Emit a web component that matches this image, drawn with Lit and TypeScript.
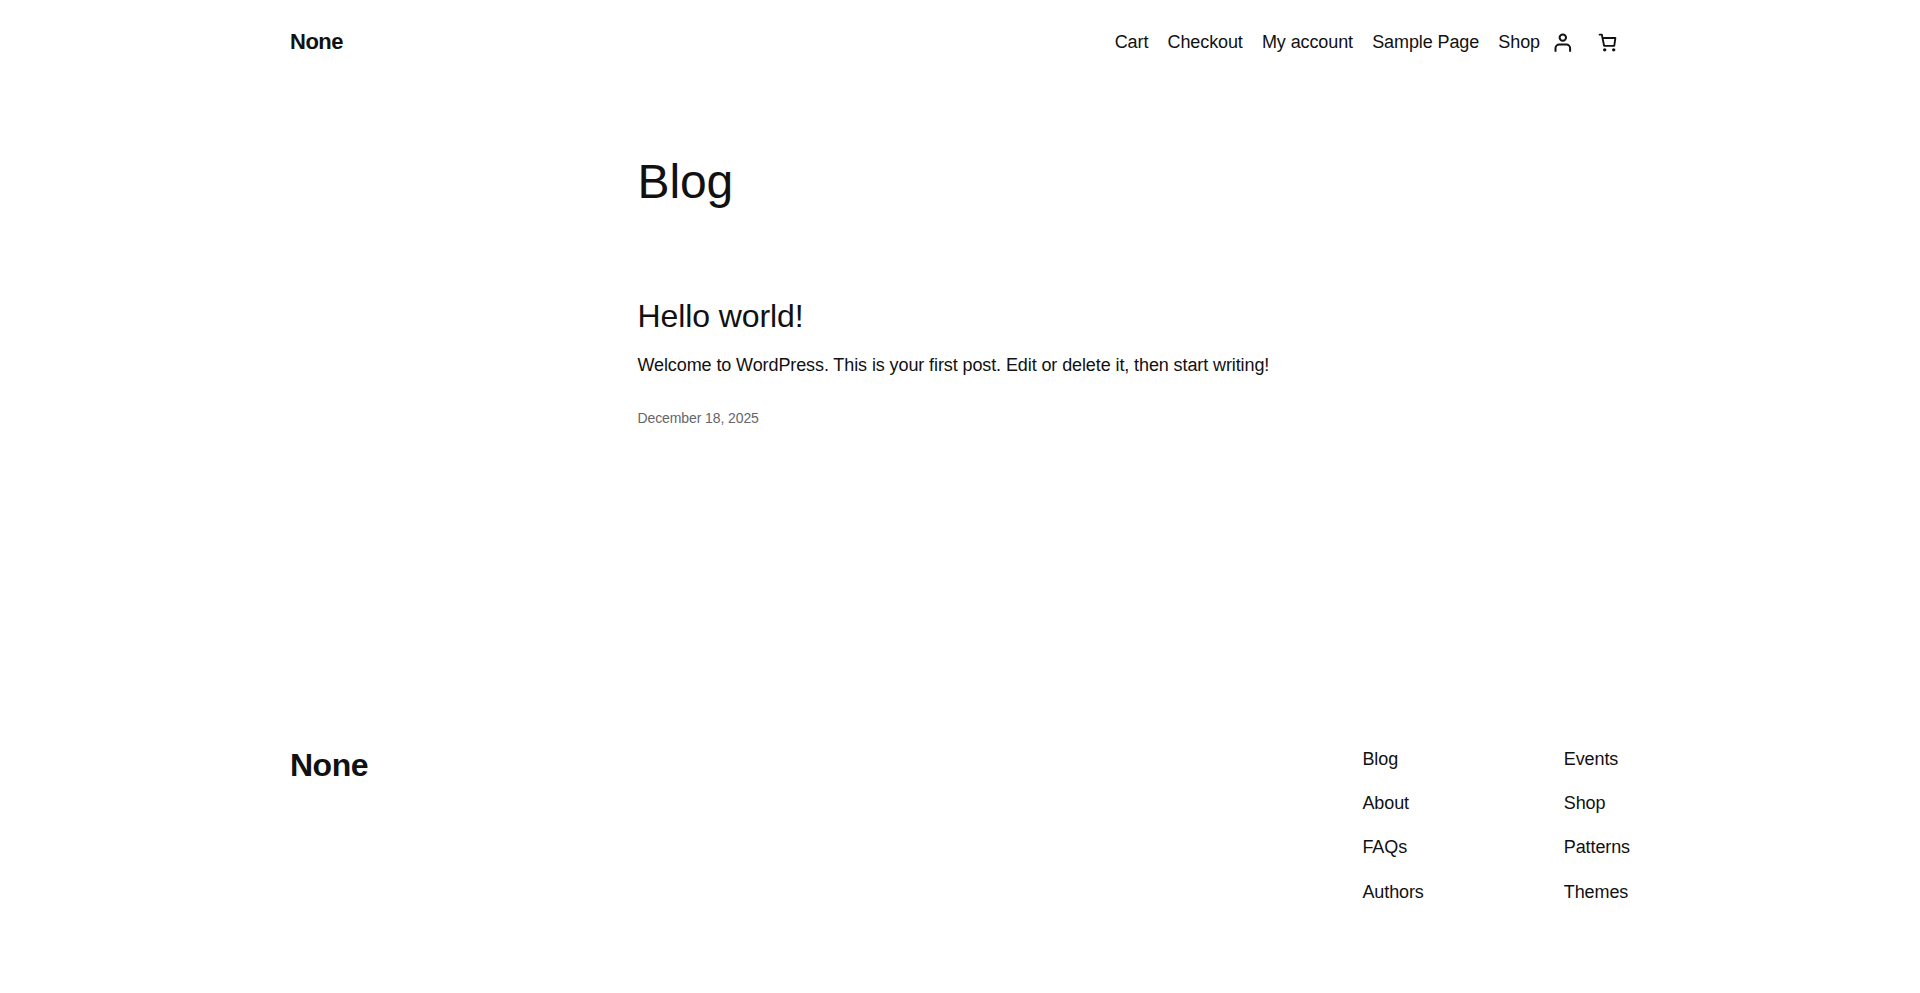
import { LitElement, html, css } from "lit";
import { customElement } from "lit/decorators.js";

const NAV = ["Cart", "Checkout", "My account", "Sample Page", "Shop"];
const FOOTER = [
  ["Blog", "About", "FAQs", "Authors"],
  ["Events", "Shop", "Patterns", "Themes"],
];

@customElement("app-root")
export class AppRoot extends LitElement {
  static styles = css`
    :host {
      display: block;
      min-height: 993px;
      background: #fff;
      color: #111;
      font: 300 18px/1.4 "Liberation Sans", Arial, sans-serif;
      letter-spacing: -0.1px;
    }
    * { box-sizing: border-box; }
    a { color: inherit; text-decoration: none; }
    h1, h2, p { margin: 0; font-weight: 400; }
    .wide { width: 1340px; margin: 0 auto; }
    .narrow { width: 645px; margin: 0 auto; }
    header { display: flex; justify-content: space-between; align-items: center; height: 85px; }
    .title { font-size: 22px; line-height: 31px; font-weight: 700; letter-spacing: -0.5px; margin-bottom: 2px; }
    .right { display: flex; align-items: center; }
    nav { display: flex; gap: 19.2px; }
    .icons { display: flex; }
    .icon { display: flex; padding: 0 9px; }
    main { padding-top: 69px; height: 660px; }
    h1 { font-size: 48px; line-height: 1.15; letter-spacing: -0.1px; }
    h2 { font-size: 32px; line-height: 1.125; letter-spacing: -0.1px; margin-top: 89px; }
    .text { margin-top: 19px; }
    time { display: block; margin-top: 31px; font-size: 14px; color: #666; }
    footer { display: flex; justify-content: space-between; }
    .brand { font-size: 32px; line-height: 1.25; font-weight: 700; letter-spacing: -0.5px; }
    .cols { display: flex; gap: 140px; padding-top: 2px; }
    .col { display: flex; flex-direction: column; gap: 19px; }
  `;

  render() {
    return html`
      <header class="wide">
        <a class="title" href="#">None</a>
        <div class="right">
          <nav>${NAV.map((n) => html`<a href="#">${n}</a>`)}</nav>
          <div class="icons">
            <a class="icon" href="#" aria-label="Account">
              <svg width="27" height="27" viewBox="0 0 27 27" fill="none" stroke="#111" stroke-width="2">
                <circle cx="13.8" cy="8.6" r="3.2" />
                <path d="M6.500 22.8v-3.600a3.7 3.7 0 0 1 3.7-3.7h7.200a3.7 3.7 0 0 1 3.7 3.7v3.600" />
              </svg>
            </a>
            <a class="icon" href="#" aria-label="Cart">
              <svg width="27" height="27" viewBox="0 0 32 32" fill="#111">
                <circle cx="12.667" cy="24.667" r="2" />
                <circle cx="23.333" cy="24.667" r="2" />
                <path
                  d="M6.667 6.667h2.666l.727 4h15.273L24 20H12l-1.940-9.333"
                  fill="none"
                  stroke="#111"
                  stroke-width="2.2"
                  stroke-linecap="round"
                  stroke-linejoin="round"
                />
              </svg>
            </a>
          </div>
        </div>
      </header>
      <main>
        <div class="narrow">
          <h1>Blog</h1>
          <h2><a href="#">Hello world!</a></h2>
          <p class="text">Welcome to WordPress. This is your first post. Edit or delete it, then start writing!</p>
          <time>December 18, 2025</time>
        </div>
      </main>
      <footer class="wide">
        <a class="brand" href="#">None</a>
        <div class="cols">
          ${FOOTER.map((c) => html`<div class="col">${c.map((t) => html`<a href="#">${t}</a>`)}</div>`)}
        </div>
      </footer>
    `;
  }
}
